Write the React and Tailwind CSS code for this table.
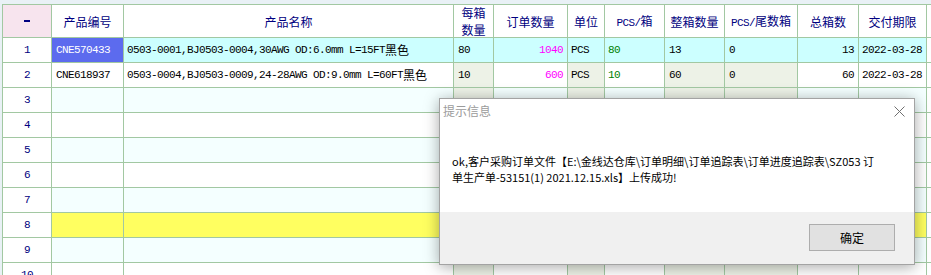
import React from 'react';

// column layout of the order grid; widths include the 1px right border
const COLS = [
  { key: 'no', w: 'w-[49px]' },
  { key: 'code', w: 'w-[72px]', label: '产品编号', pad: 'pl-[4px]' },
  { key: 'name', w: 'w-[330px]', label: '产品名称', pad: 'pl-[3px]' },
  { key: 'perBox', w: 'w-[40px]', label: '每箱数量', ro: true, pad: 'pl-[4px]' },
  { key: 'qty', w: 'w-[74px]', label: '订单数量', pad: 'pr-[4px] justify-end', color: 'text-[#ff00ff]' },
  { key: 'unit', w: 'w-[37px]', label: '单位', ro: true, pad: 'pl-[3px]' },
  { key: 'pcsBox', w: 'w-[60px]', label: 'PCS/箱', pad: 'pl-[3px]', color: 'text-[#008000]' },
  { key: 'fullBox', w: 'w-[60px]', label: '整箱数量', ro: true, pad: 'pl-[4px]' },
  { key: 'tail', w: 'w-[73px]', label: 'PCS/尾数箱', ro: true, pad: 'pl-[4px]' },
  { key: 'boxes', w: 'w-[61px]', label: '总箱数', pad: 'pr-[4px] justify-end' },
  { key: 'due', w: 'w-[68px]', label: '交付期限', pad: 'pl-[3px]' },
];

const ROWS = [
  {
    code: 'CNE570433',
    name: '0503-0001,BJ0503-0004,30AWG OD:6.0mm L=15FT黑色',
    perBox: '80', qty: '1040', unit: 'PCS', pcsBox: '80', fullBox: '13', tail: '0', boxes: '13', due: '2022-03-28',
  },
  {
    code: 'CNE618937',
    name: '0503-0004,BJ0503-0009,24-28AWG OD:9.0mm L=60FT黑色',
    perBox: '10', qty: '600', unit: 'PCS', pcsBox: '10', fullBox: '60', tail: '0', boxes: '60', due: '2022-03-28',
  },
  {}, {}, {}, {}, {}, {}, {}, {},
];

// half-width runs in a mono face, CJK runs at full 12px
function Txt({ s }) {
  const parts = s.match(/[\u0000-\u00ff]+|[^\u0000-\u00ff]+/g) || [];
  return parts.map((p, i) =>
    /^[\u0000-\u00ff]+$/.test(p) ? (
      <span key={i} className="font-['Liberation_Mono',monospace] text-[11px] tracking-[-0.6px]">{p}</span>
    ) : (
      <span key={i} className="font-['Noto_Sans_CJK_SC',sans-serif] text-[12px]">{p}</span>
    )
  );
}

function cellBg(rowIdx, col) {
  if (col.key === 'no') return 'bg-white';
  if (rowIdx === 0) {
    return col.key === 'code' ? 'bg-[#5c6bee] text-white' : 'bg-[#ccffff]';
  }
  if (rowIdx === 7) return 'bg-[#ffff60]';
  if (col.ro) return 'bg-[#edf2e7]';
  return rowIdx % 2 === 0 ? 'bg-[#f4ffff]' : 'bg-white';
}

function HeaderRow() {
  return (
    <div className="flex">
      {COLS.map((c) => (
        <div
          key={c.key}
          className={`${c.w} h-[33px] shrink-0 border-r border-b border-[#a2c8a2] flex items-center justify-center text-center leading-[16px] text-[#000080] ${
            c.key === 'no' ? 'bg-[#f7e4ee]' : 'bg-white'
          }`}
        >
          {c.key === 'no' ? (
            <span className="block w-[6px] h-[2px] bg-[#000080]" />
          ) : (
            <span className={c.key === 'perBox' ? 'w-[26px]' : ''}>
              <Txt s={c.label} />
            </span>
          )}
        </div>
      ))}
      <div className="w-[5px] h-[33px] shrink-0 border-b border-[#a2c8a2] bg-white" />
    </div>
  );
}

function DataRow({ row, idx }) {
  return (
    <div className="flex">
      {COLS.map((c) => (
        <div
          key={c.key}
          className={`${c.w} h-[25px] shrink-0 border-r border-b border-[#a2c8a2] flex items-center whitespace-nowrap overflow-hidden ${cellBg(
            idx,
            c
          )} ${c.key === 'no' ? 'justify-center text-[#000080]' : c.pad} ${
            c.color && !(idx === 0 && c.key === 'code') ? c.color : c.key !== 'no' && !(idx === 0 && c.key === 'code') ? 'text-black' : ''
          }`}
        >
          {c.key === 'no' ? <Txt s={String(idx + 1)} /> : row[c.key] ? <Txt s={row[c.key]} /> : null}
        </div>
      ))}
      <div className="w-[5px] h-[25px] shrink-0 border-b border-[#a2c8a2] bg-white" />
    </div>
  );
}

function MessageBox() {
  return (
    <div className="absolute left-[439px] top-[98px] w-[476px] h-[167px] border border-[#a3a3a3] bg-white shadow-[0_2px_14px_rgba(0,0,0,0.35)] flex flex-col font-['Noto_Sans_CJK_SC',sans-serif]">
      <div className="relative h-[113px]">
        <div className="pl-[3px] pt-[4px] text-[12px] leading-[16px] text-[#9b9b9b]">提示信息</div>
        <svg className="absolute left-[454px] top-[7px]" width="11" height="11" viewBox="0 0 11 11">
          <path d="M0.5 0.5 L10.5 10.5 M10.5 0.5 L0.5 10.5" stroke="#707070" strokeWidth="1" fill="none" />
        </svg>
        <div className="absolute left-[12px] top-[54px] text-[11px] leading-[16px] text-black whitespace-nowrap">
          ok,客户采购订单文件【E:\金线达仓库\订单明细\订单追踪表\订单进度追踪表\SZ053 订
          <br />
          单生产单-53151(1) 2021.12.15.xls】上传成功!
        </div>
      </div>
      <div className="flex-1 bg-[#f0f0f0] flex justify-end items-start pt-[12px] pr-[19px]">
        <button className="w-[86px] h-[27px] bg-[#e1e1e1] border border-[#adadad] text-[12px] text-black leading-none">
          确定
        </button>
      </div>
    </div>
  );
}

export default function App() {
  return (
    <div className="relative w-[931px] h-[275px] overflow-hidden bg-[#e9f1f6] pt-[4px] pl-[2px]">
      <div className="border-t border-l border-[#a2c8a2] w-max">
        <HeaderRow />
        {ROWS.map((r, i) => (
          <DataRow key={i} row={r} idx={i} />
        ))}
      </div>
      <MessageBox />
    </div>
  );
}
